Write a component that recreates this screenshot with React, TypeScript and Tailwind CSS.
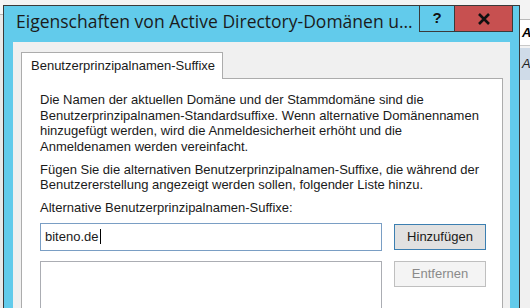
import React from "react";

const ui = { fontFamily: '"Liberation Sans", Arial, sans-serif' };
const titleFont = { fontFamily: '"Open Sans", "Noto Sans", sans-serif' };

const App: React.FC = () => {
  return (
    <div className="w-[530px] h-[308px] overflow-hidden bg-[#f3f3f3] flex" style={ui}>
      {/* left desktop strip */}
      <div className="w-[3px] shrink-0 flex flex-col">
        <div className="h-[14px] bg-[#f6f6f6]" />
        <div className="h-px bg-[#b5b5b5]" />
        <div className="flex-1 bg-[#e9e9e9]" />
      </div>

      {/* dialog window */}
      <div className="mt-[5px] w-[517px] shrink-0 flex flex-col border border-b-0 border-[#3a3a3a] bg-[#62cbeb]">
        {/* title bar */}
        <div className="h-[36px] shrink-0 flex items-start pl-[12px] pr-[6px]">
          <div className="flex-1 pt-[3px] text-[17.5px] leading-[24px] text-[#1b1b1b] whitespace-nowrap" style={titleFont}>
            Eigenschaften von Active Directory-Domänen u...
          </div>
          <div className="-mt-px flex h-[27px] border border-[#3a3a3a]">
            <div className="w-[34px] flex items-center justify-center text-[15px] font-bold text-[#111]">?</div>
            <div className="w-[58px] flex items-center justify-center bg-[#c75050] border-l border-[#3a3a3a]">
              <svg width="14" height="12" viewBox="0 0 14 12">
                <path d="M2 1 L12 11 M12 1 L2 11" stroke="#111" strokeWidth="2.6" />
              </svg>
            </div>
          </div>
        </div>

        {/* client area */}
        <div className="flex-1 min-h-0 mx-[9px] bg-[#f0f0f0] pt-[10px] pl-[8px] pr-[7px] flex flex-col">
          {/* tab header */}
          <div className="flex shrink-0">
            <div className="w-[202px] h-[27px] -mb-px bg-white border border-b-0 border-[#acacac] pl-[9px] text-[13px] leading-[26px] text-[#1a1a1a] relative z-10">
              Benutzerprinzipalnamen-Suffixe
            </div>
          </div>

          {/* tab panel */}
          <div className="flex-1 min-h-0 bg-white border border-[#acacac] border-b-0 pl-[18px] pt-[13px] text-[13px] leading-[15.5px] text-[#1a1a1a]">
            <p>
              Die Namen der aktuellen Domäne und der Stammdomäne sind die
              <br />
              Benutzerprinzipalnamen-Standardsuffixe. Wenn alternative Domänennamen
              <br />
              hinzugefügt werden, wird die Anmeldesicherheit erhöht und die
              <br />
              Anmeldenamen werden vereinfacht.
            </p>
            <p className="mt-[7.5px]">
              Fügen Sie die alternativen Benutzerprinzipalnamen-Suffixe, die während der
              <br />
              Benutzererstellung angezeigt werden sollen, folgender Liste hinzu.
            </p>
            <p className="mt-[7.5px]">Alternative Benutzerprinzipalnamen-Suffixe:</p>

            <div className="mt-[7px] flex items-start gap-[12px]">
              <div className="w-[342px] flex flex-col gap-[10px]">
                <div className="h-[28px] border border-[#7a9ec4] bg-white pl-[4px] flex items-center">
                  <span>biteno.de</span>
                  <span className="w-px h-[15px] bg-black ml-px" />
                </div>
                <div className="h-[60px] border border-[#abadb3] bg-white" />
              </div>
              <div className="flex flex-col gap-[11px] pt-px">
                <button className="w-[92px] h-[26px] bg-[#e1e1e1] border border-[#3c7fb1] text-[#1a1a1a] text-[13px]">
                  Hinzufügen
                </button>
                <button className="w-[92px] h-[26px] bg-[#f4f4f4] border border-[#bfbfbf] text-[#8a8a8a] text-[13px]">
                  Entfernen
                </button>
              </div>
            </div>
          </div>
        </div>
      </div>

      {/* partial window on the right */}
      <div className="flex-1 flex flex-col">
        <div className="h-[20px] bg-[#f3f3f3] border-b border-[#b9b9b9]" />
        <div className="h-[25px] bg-white pl-[2px] text-[13px] leading-[25px] text-black font-bold italic">A</div>
        <div className="h-px bg-[#c9c9c9]" />
        <div className="h-[32px] mt-[2px] bg-[#cfdbe8] pl-[2px] text-[13px] leading-[32px] text-[#222] italic">A</div>
        <div className="flex-1 bg-[#f0f0f0]" />
      </div>
    </div>
  );
};

export default App;
